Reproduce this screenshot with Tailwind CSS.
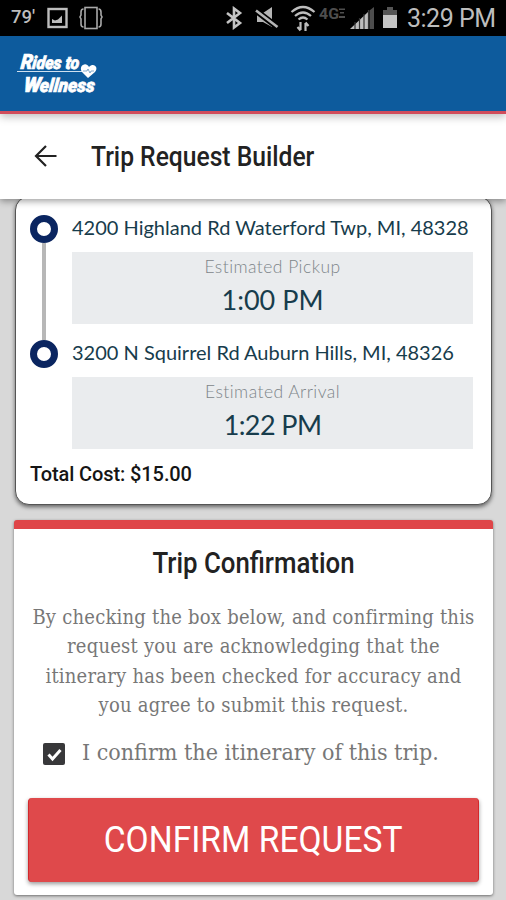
<!DOCTYPE html>
<html lang="en">
<head>
<meta charset="utf-8">
<title>Trip Request Builder</title>
<script src="https://cdn.jsdelivr.net/npm/@tailwindcss/browser@4"></script>
</head>
<body class="w-[506px] h-[900px] overflow-hidden bg-[#d8d8d8] font-['Roboto',sans-serif] flex flex-col">
<div class="h-9 shrink-0 bg-black flex items-center pl-[11px] pr-[9px] text-[#bdbdbd]">
  <span class="text-[18.5px] font-medium w-[36px]">79'</span>
  <svg class="w-[21px] h-[22px]" viewBox="0 0 21 22"><rect x="1.5" y="2" width="18" height="18" fill="none" stroke="#bdbdbd" stroke-width="2.4"/><path d="M5 16V12l3 1.500 3-1 4-4V16z" fill="#bdbdbd"/></svg>
  <svg class="w-[24px] h-[24px] ml-[11px]" viewBox="0 0 24 24" fill="none" stroke="#a9a9a9" stroke-width="1.6"><rect x="6" y="1.5" width="12" height="21"/><path d="M4.500 3Q2 3 2 6v3l-1 2 1 2v5q0 3 2.500 3M19.500 3q2.500 0 2.500 3v3l1 2-1 2v5q0 3-2.500 3"/></svg>
  <svg class="w-[18px] h-[24px] ml-[122px]" viewBox="0 0 18 24" fill="none" stroke="#c4c4c4" stroke-width="2.6"><path d="M2 7l13 10-6 4.500V2.500L15 7 2 17"/></svg>
  <svg class="w-[24px] h-[24px] ml-[12px]" viewBox="0 0 24 24"><path d="M2 7h6l9-6v20l-9-5H2z" fill="#b5b5b5"/><path d="M0 4L23 21.500" stroke="#000" stroke-width="6"/><path d="M1 4.500L22.500 21" stroke="#b5b5b5" stroke-width="2.600"/></svg>
  <svg class="w-[26px] h-[28px] ml-[11px]" viewBox="0 0 26 28" fill="none" stroke="#bdbdbd" stroke-width="2.2"><path d="M1.500 8Q13-2 24.500 8M5 12q8-7 16 0M8.500 15.500q4.500-4 9 0"/><path d="M10.500 18v8m-3-3l3 3.500M15.500 27v-8m3 3l-3-3.500"/></svg>
  <svg class="w-[28px] h-[14px] ml-[3px] mb-[9px] overflow-visible" viewBox="0 0 28 14" fill="#4e4e4e"><text x="0" y="12" font-family="Roboto" font-weight="700" font-size="15" textLength="20" lengthAdjust="spacingAndGlyphs">4G</text><path d="M20 1.500h6v1.500h-6zM21 5h4v1.500h-4zM20 9h6v2h-6z"/></svg>
  <svg class="w-[26px] h-[24px] ml-[3px]" viewBox="0 0 26 24"><path d="M0 23L18 6v17z" fill="#bdbdbd"/><path d="M19.500 4.500L24 1v22h-4.500z" fill="#4d4d4d"/><path d="M5 16v7M9.500 12v11M14 8v15M18.500 4v19" stroke="#333" stroke-width="1.200"/></svg>
  <svg class="w-[16px] h-[24px] ml-[6px]" viewBox="0 0 16 24"><path d="M5 1h6v3h4v5H1V4h4z" fill="#555"/><path d="M1 9h14v13H1z" fill="#c4c4c4"/></svg>
  <span class="text-[25px] ml-[9px] leading-9 whitespace-nowrap tracking-[-0.5px] relative top-[1px]">3:29 PM</span>
</div>
<div class="h-[78px] shrink-0 bg-[#0d5b9d] border-b-[3px] border-[#d04c5b] relative z-20 shadow-[0_3px_8px_rgba(0,0,0,0.25)]">
  <svg class="w-[90px] h-[48px] ml-[14px] mt-[14px]" viewBox="14 50 90 48" fill="#fff">
    <g transform="skewX(-6)" font-family="Roboto" font-style="italic" font-weight="900" stroke="#fff" stroke-width=".7">
      <text x="27.500" y="69" font-size="21" textLength="12" lengthAdjust="spacingAndGlyphs">R</text>
      <text x="39" y="69" font-size="18" textLength="47" lengthAdjust="spacingAndGlyphs">ides to</text>
      <text x="33" y="92" font-size="21" textLength="17" lengthAdjust="spacingAndGlyphs">W</text>
      <text x="49" y="92" font-size="19" textLength="55" lengthAdjust="spacingAndGlyphs">ellness</text>
    </g>
    <path d="M17 71h66v1H17z" fill="#cfe0ef"/>
    <path d="M88 78l-6-6c-4-6 4-11 7-5 5-5 10 1 6 5z"/>
    <path d="M83 71h4l1-2 2 4 1-2h3" fill="none" stroke="#0d5b9d" stroke-width=".5"/>
  </svg>
</div>
<div class="h-[85px] shrink-0 bg-white flex items-center relative z-10 shadow-[0_2px_7px_rgba(0,0,0,0.4)]">
  <svg class="w-[24px] h-[24px] ml-[34px] mb-[2px]" viewBox="0 0 24 24" fill="none" stroke="#222" stroke-width="2.200"><path d="M22.500 12H2.500M12 2L2 12l10 10"/></svg>
  <h1 class="ml-[33px] text-[28px] font-medium text-[#222] whitespace-nowrap origin-left scale-x-[0.88]">Trip Request Builder</h1>
</div>
<main class="flex flex-col pl-[14px] pr-[13px] gap-[15px] text-[#173c4c]">
  <section class="h-[309px] -mt-[3px] ml-px mr-px bg-white border border-[#555] rounded-[14px] shadow-[0_2px_4px_rgba(0,0,0,0.55)] pl-[14px] pr-[18px] pt-[18px]">
    <div class="flex gap-[14px]">
      <div class="flex flex-col items-center w-[28px] shrink-0">
        <i class="size-[28px] rounded-full border-[7px] border-[#0a2560] shrink-0"></i>
        <i class="w-[4px] h-[97px] bg-[#b7b7b7]"></i>
        <i class="size-[28px] rounded-full border-[7px] border-[#0a2560] shrink-0"></i>
      </div>
      <div class="w-[401px] font-['Lato',sans-serif] whitespace-nowrap">
        <p class="h-[37px] leading-[24px] text-[20px]">4200 Highland Rd Waterford Twp, MI, 48328</p>
        <div class="h-[72px] bg-[#eaecee] text-center pt-[3px]"><p class="text-[17.500px] tracking-[0.45px] leading-[24px] text-[#7d8589] font-light">Estimated Pickup</p><p class="text-[27px] leading-[42px]">1:00 PM</p></div>
        <p class="h-[53px] pt-[16px] leading-[25px] text-[20px]">3200 N Squirrel Rd Auburn Hills, MI, 48326</p>
        <div class="h-[72px] bg-[#eaecee] text-center pt-[3px]"><p class="text-[17.500px] tracking-[0.45px] leading-[24px] text-[#7d8589] font-light">Estimated Arrival</p><p class="text-[27px] leading-[42px] tracking-[-0.6px]">1:22 PM</p></div>
      </div>
    </div>
    <p class="mt-[13px] text-[20px] tracking-[-0.1px] leading-[25px] font-medium text-[#151515]">Total Cost: $15.00</p>
  </section>
  <section class="h-[375px] bg-white border-t-[9px] border-[#df4548] rounded-[3px] shadow-[0_1px_3px_rgba(0,0,0,0.5)] px-[14px] text-[#777]">
    <h2 class="text-center mt-[13px] text-[30px] leading-[42px] font-medium text-[#222] scale-x-[0.86] whitespace-nowrap">Trip Confirmation</h2>
    <p class="-mx-[10px] mt-[19px] text-center font-['DejaVu_Serif_Condensed','DejaVu_Serif',serif] text-[20px] tracking-[0.22px] leading-[29.4px] whitespace-nowrap">By checking the box below, and confirming this<br>request you are acknowledging that the<br>itinerary has been checked for accuracy and<br>you agree to submit this request.</p>
    <div class="flex items-center h-[40px] mt-[13px] pl-[15px] whitespace-nowrap">
      <svg class="size-[22px] shrink-0" viewBox="0 0 22 22"><rect width="22" height="22" rx="2" fill="#38383a"/><path d="M5.500 11.500l4 4.500 8-9" fill="none" stroke="#fff" stroke-width="3"/></svg>
      <span class="ml-[17px] font-['DejaVu_Serif_Condensed','DejaVu_Serif',serif] text-[23px] -mt-[3px]">I confirm the itinerary of this trip.</span>
    </div>
    <button class="mt-[24px] w-[451px] h-[84px] bg-[#df494b] rounded-[4px] border-x border-[#d2292c] shadow-[0_2px_4px_rgba(0,0,0,0.4)] text-white text-[36px] whitespace-nowrap"><span class="inline-block scale-x-[0.933]">CONFIRM REQUEST</span></button>
  </section>
</main>
</body>
</html>
